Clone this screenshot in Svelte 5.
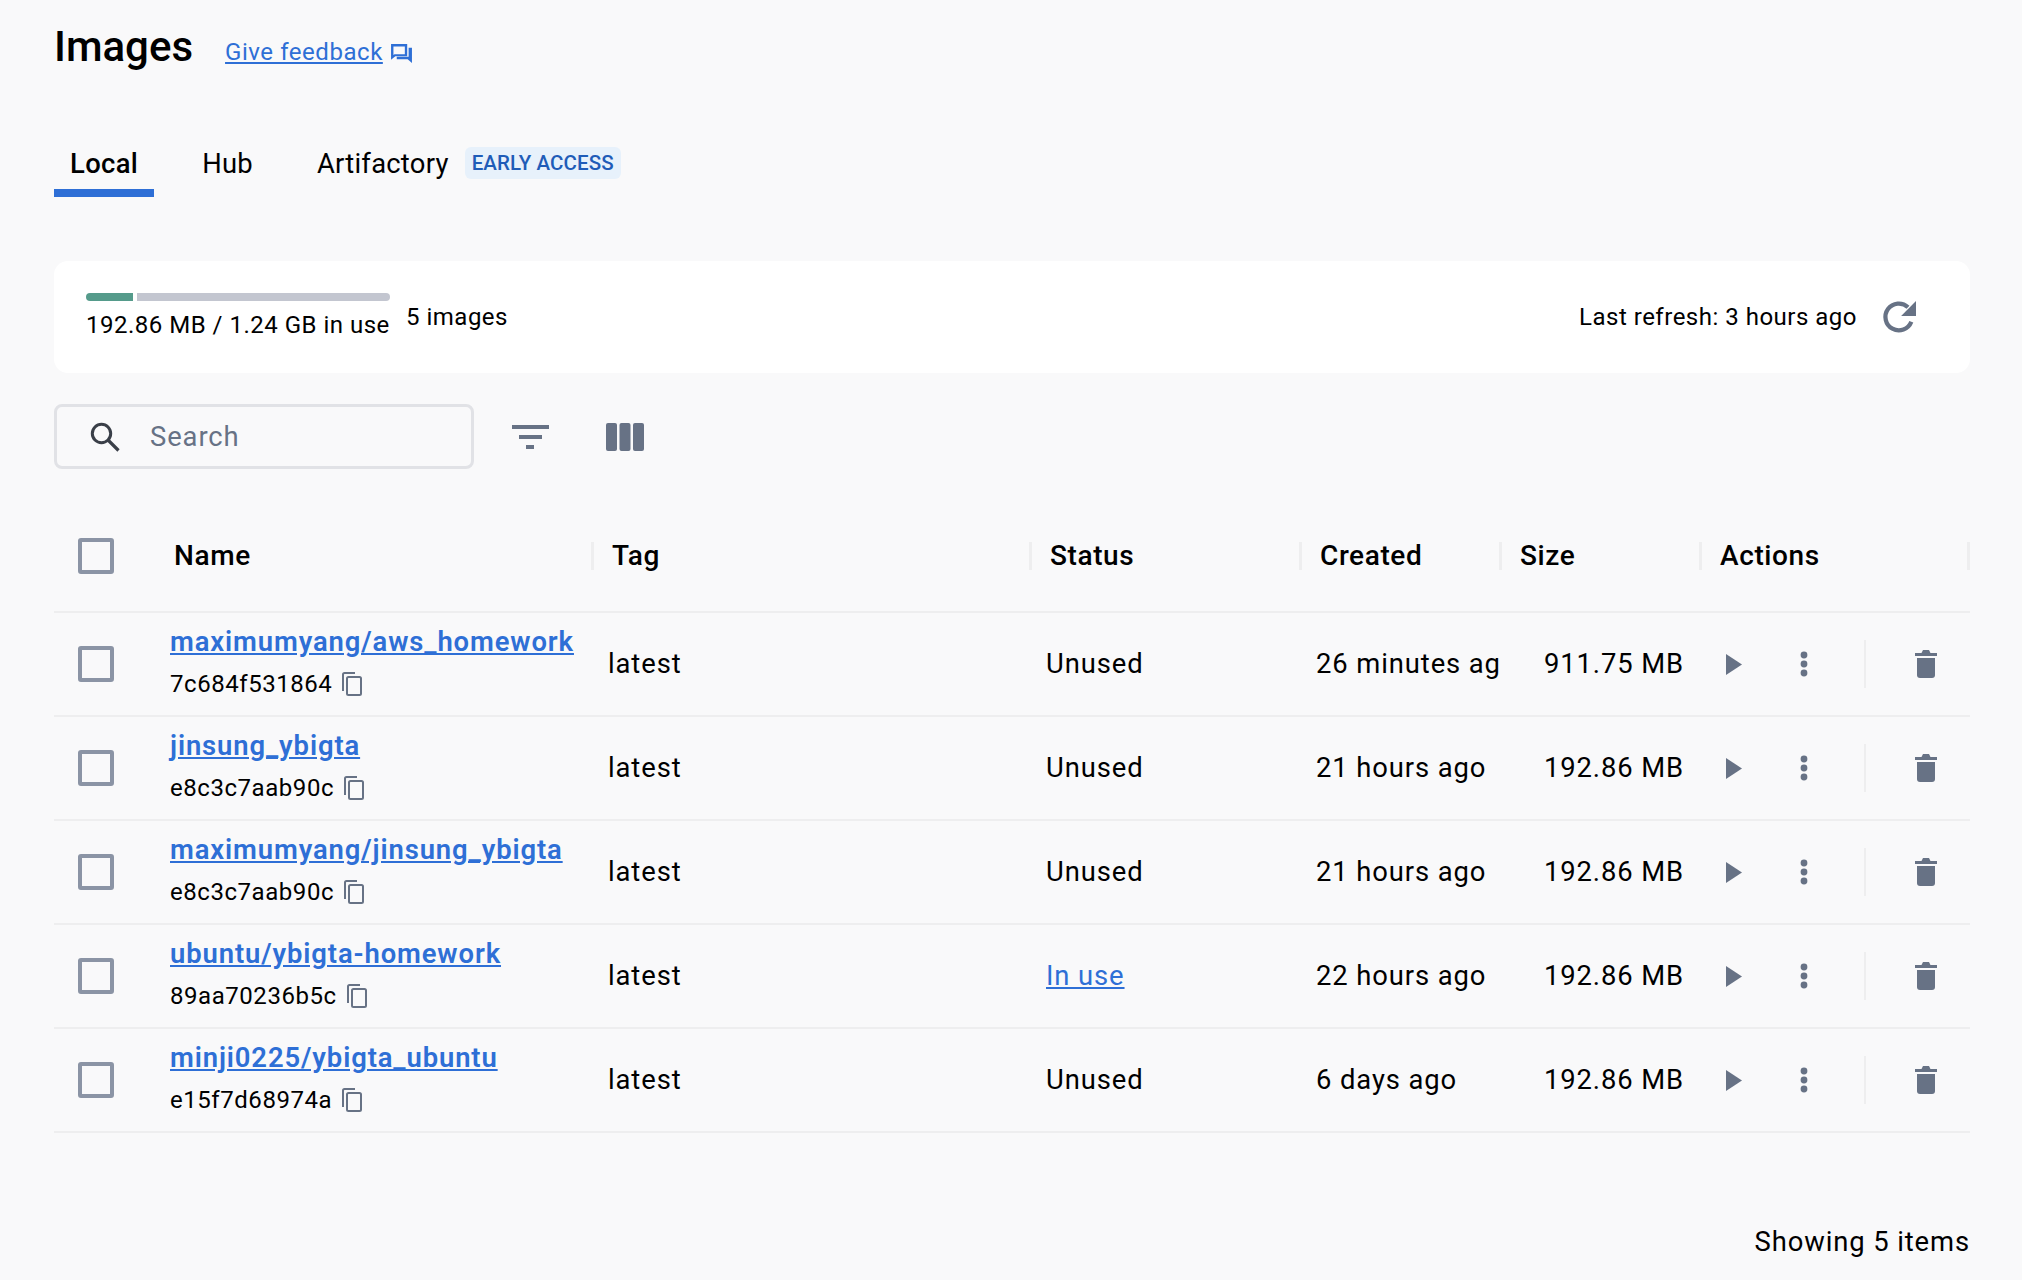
<script>
	const images = [
		{ name: 'maximumyang/aws_homework', id: '7c684f531864', status: 'Unused', created: '26 minutes ago', size: '911.75 MB' },
		{ name: 'jinsung_ybigta', id: 'e8c3c7aab90c', status: 'Unused', created: '21 hours ago', size: '192.86 MB' },
		{ name: 'maximumyang/jinsung_ybigta', id: 'e8c3c7aab90c', status: 'Unused', created: '21 hours ago', size: '192.86 MB' },
		{ name: 'ubuntu/ybigta-homework', id: '89aa70236b5c', status: 'In use', created: '22 hours ago', size: '192.86 MB' },
		{ name: 'minji0225/ybigta_ubuntu', id: 'e15f7d68974a', status: 'Unused', created: '6 days ago', size: '192.86 MB' }
	];
	const columns = ['Name', 'Tag', 'Status', 'Created', 'Size', 'Actions'];
</script>

<main class="page">
	<header class="title-row">
		<h1>Images</h1>
		<a class="feedback" href="#feedback">Give feedback</a>
		<svg class="feedback-icon" viewBox="0 0 22 20" width="21" height="19">
			<path d="M0 0h17v13H4.5L0 16.5z M2.5 2.5v9l1.2-.7H14.5V2.5z" fill="#2e6fd6" fill-rule="evenodd" />
			<path d="M18.5 4H22v16l-4.5-4H6v-2.5h12.5z" fill="#2e6fd6" />
		</svg>
	</header>

	<nav class="tabs">
		<span class="tab active">Local</span>
		<span class="tab">Hub</span>
		<span class="tab">Artifactory</span>
		<span class="badge">EARLY ACCESS</span>
	</nav>

	<section class="usage">
		<div class="usage-left">
			<div class="bar"><span class="bar-used"></span><span class="bar-rest"></span></div>
			<div class="usage-text">192.86 MB / 1.24 GB in use</div>
		</div>
		<div class="count">5 images</div>
		<div class="refresh">Last refresh: 3 hours ago</div>
		<svg class="refresh-icon" viewBox="0 0 32 32" width="34" height="34">
			<path d="M27.6 20.5A12.6 12.6 0 1 1 24.5 6.8" fill="none" stroke="#677285" stroke-width="4" />
			<path d="M32 1v14H18z" fill="#677285" />
		</svg>
	</section>

	<div class="toolbar">
		<div class="search">
			<svg viewBox="0 0 30 30" width="30" height="30">
				<circle cx="11.5" cy="11.5" r="9.2" fill="none" stroke="#3a3f48" stroke-width="3" />
				<path d="M18 18l10.5 10.5" stroke="#3a3f48" stroke-width="3.2" fill="none" />
			</svg>
			<span>Search</span>
		</div>
		<svg class="filter-icon" viewBox="0 0 37 24" width="37" height="24">
			<path d="M0 0h37v4H0zM7 10h23v4H7zM14 20h8v4h-8z" fill="#677285" />
		</svg>
		<svg class="columns-icon" viewBox="0 0 38 28" width="38" height="28">
			<rect width="11" height="28" rx="2" fill="#677285" />
			<rect x="13.5" width="11" height="28" rx="2" fill="#677285" />
			<rect x="27" width="11" height="28" rx="2" fill="#677285" />
		</svg>
	</div>

	<div class="table">
		<div class="row head">
			<div class="check-cell"><span class="checkbox"></span></div>
			{#each columns as col}
				<div class="th">{col}</div>
			{/each}
		</div>

		{#each images as img}
			<div class="row">
				<div class="check-cell"><span class="checkbox"></span></div>
				<div class="td name-cell">
					<a class="name" href="#image">{img.name}</a>
					<div class="id">
						{img.id}
						<svg viewBox="0 0 20 24" width="20" height="24">
							<path d="M1 19V2.5C1 1.7 1.7 1 2.5 1H13" fill="none" stroke="#677285" stroke-width="2" />
							<rect x="5" y="5" width="14" height="18" rx="1.5" fill="none" stroke="#677285" stroke-width="2" />
						</svg>
					</div>
				</div>
				<div class="td">latest</div>
				<div class="td">
					{#if img.status === 'In use'}
						<a class="status-link" href="#container">{img.status}</a>
					{:else}
						{img.status}
					{/if}
				</div>
				<div class="td created">{img.created}</div>
				<div class="td size">{img.size}</div>
				<div class="actions">
					<span class="action">
						<svg viewBox="0 0 16 21" width="16" height="21"><path d="M0 0l16 10.5L0 21z" fill="#677285" /></svg>
					</span>
					<span class="action dots">
						<svg viewBox="0 0 8 26" width="8" height="26">
							<circle cx="4" cy="4" r="3.4" fill="#677285" />
							<circle cx="4" cy="13" r="3.4" fill="#677285" />
							<circle cx="4" cy="22" r="3.4" fill="#677285" />
						</svg>
					</span>
					<span class="action-sep"></span>
					<span class="action trash">
						<svg viewBox="0 0 22 28" width="22" height="28">
							<path d="M0 3h6.5L8 0h6l1.5 3H22v3H0z" fill="#677285" />
							<path d="M2 8h18v17a3 3 0 0 1-3 3H5a3 3 0 0 1-3-3z" fill="#677285" />
						</svg>
					</span>
				</div>
			</div>
		{/each}
	</div>

	<footer class="foot">Showing 5 items</footer>
</main>

<style>
	:global(body) {
		background: #f9f9fa;
	}
	.page {
		box-sizing: border-box;
		width: 2022px;
		height: 1280px;
		padding: 0 52px 0 54px;
		font-family: Roboto, 'Liberation Sans', sans-serif;
		font-size: 27.4px;
		letter-spacing: 0.9px;
		color: #000;
		overflow: hidden;
	}
	.title-row {
		display: flex;
		align-items: center;
		height: 92px;
	}
	h1 {
		margin: 0 32px 0 0;
		font-size: 42px;
		font-weight: 500;
		letter-spacing: 0;
	}
	.feedback {
		font-size: 24px;
		letter-spacing: 0.55px;
		color: #2e6fd6;
		margin-top: 11px;
	}
	.feedback-icon {
		margin: 14px 0 0 8px;
	}
	.tabs {
		display: flex;
		align-items: center;
		height: 66px;
		margin-top: 39px;
	}
	.tab {
		box-sizing: border-box;
		height: 66px;
		line-height: 66px;
		padding: 0 16px;
		margin-right: 32px;
		border-bottom: 8px solid transparent;
		font-size: 27.4px;
		letter-spacing: 0.25px;
	}
	.tab:nth-child(3) {
		margin-right: 0;
	}
	.tab.active {
		border-bottom-color: #2e6fd6;
		font-weight: 500;
		letter-spacing: 0.35px;
		margin-right: 32px;
	}
	.badge {
		margin: 0 0 2px 0;
		height: 32px;
		line-height: 32px;
		padding: 0 7px;
		border-radius: 6px;
		background: #e7f1fb;
		color: #1f5cb8;
		font-size: 20.5px;
		font-weight: 500;
		letter-spacing: 0.1px;
	}
	.usage {
		display: flex;
		align-items: center;
		box-sizing: border-box;
		height: 112px;
		margin-top: 64px;
		padding: 0 55px 0 32px;
		background: #fff;
		border-radius: 14px;
		font-size: 24px;
		letter-spacing: 0.5px;
	}
	.usage-left {
		margin: 0 16px 2px 0;
	}
	.bar {
		display: flex;
		gap: 4px;
		height: 8px;
		width: 304px;
	}
	.bar-used {
		width: 47px;
		background: #559b8b;
		border-radius: 4px 0 0 4px;
	}
	.bar-rest {
		flex: 1;
		background: #c3c6d0;
		border-radius: 0 4px 4px 0;
	}
	.usage-text {
		margin-top: 10px;
		line-height: 28px;
		white-space: nowrap;
	}
	.count {
		margin-right: auto;
	}
	.refresh-icon {
		margin-left: 25px;
		margin-right: -1px;
	}
	.toolbar {
		display: flex;
		align-items: center;
		margin-top: 31px;
		height: 65px;
	}
	.search {
		display: flex;
		align-items: center;
		box-sizing: border-box;
		width: 420px;
		height: 65px;
		padding-left: 33px;
		border: 3px solid #e1e2e6;
		border-radius: 8px;
	}
	.search span {
		margin-left: 30px;
		color: #677285;
	}
	.filter-icon {
		margin-left: 38px;
	}
	.columns-icon {
		margin-left: 57px;
	}
	.table {
		margin-top: 33px;
	}
	.row {
		display: grid;
		grid-template-columns: 104px 438px 438px 270px 200px 200px 266px;
		align-items: center;
		height: 104px;
		border-bottom: 2px solid #eeeeef;
		box-sizing: border-box;
	}
	.row.head {
		height: 111px;
		padding-bottom: 2px;
	}
	.check-cell {
		padding-left: 24px;
		display: flex;
	}
	.checkbox {
		box-sizing: border-box;
		width: 36px;
		height: 36px;
		border: 4px solid #8b94a5;
		border-radius: 3px;
	}
	.th {
		box-sizing: border-box;
		padding-left: 16px;
		font-size: 28px;
		letter-spacing: 0.6px;
		font-weight: 500;
		line-height: 28px;
		border-right: 3px solid #eeeeef;
		margin-right: 2px;
	}
	.th:last-child {
		margin-right: 0;
	}
	.td {
		padding-left: 12px;
		white-space: nowrap;
		overflow: hidden;
	}
	.created {
		margin-right: 3px;
	}
	.size {
		padding: 0 20px 0 0;
		text-align: right;
	}
	.name-cell {
		overflow: visible;
		line-height: 30px;
		padding-bottom: 2px;
	}
	.name {
		color: #2e6fd6;
		font-weight: 600;
		letter-spacing: 0.9px;
	}
	.status-link {
		color: #2e6fd6;
	}
	.id {
		display: flex;
		align-items: center;
		gap: 10px;
		margin-top: 12px;
		font-size: 24px;
		letter-spacing: 0.55px;
	}
	.actions {
		display: flex;
		align-items: center;
	}
	.action {
		display: flex;
		justify-content: center;
		width: 58px;
		margin-left: 1px;
		margin-right: 12px;
	}
	.action.dots {
		margin-left: 0;
		margin-right: 13px;
	}
	.action-sep {
		width: 2px;
		height: 48px;
		background: #eeeeef;
		margin: 0 0 0 18px;
	}
	.trash {
		margin: 0 0 0 31px;
	}
	.foot {
		margin-top: 93px;
		text-align: right;
	}
</style>
